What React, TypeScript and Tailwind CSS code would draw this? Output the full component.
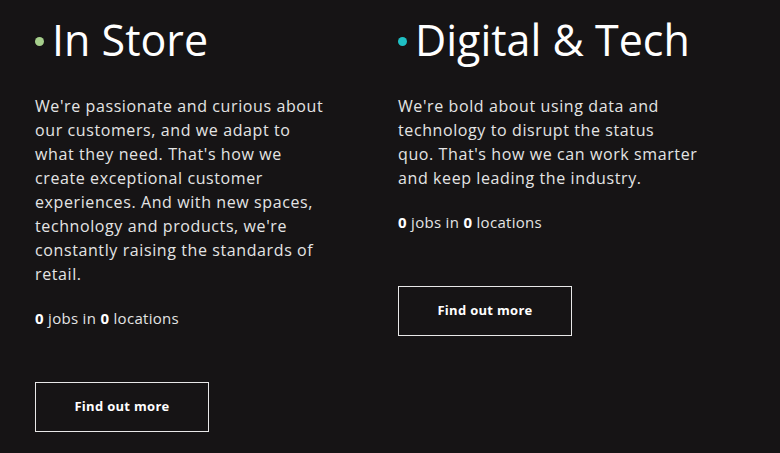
import React from 'react';

interface PillarProps {
  title: string;
  dotColor: string;
  body: React.ReactNode;
  widthClass: string;
}

const Pillar: React.FC<PillarProps> = ({ title, dotColor, body, widthClass }) => {
  return (
    <div className="flex flex-col items-start">
      {/* Heading */}
      <div className="flex items-center h-[58px]">
        <span className={`w-[9px] h-[9px] rounded-full mr-[8px] mt-[4px] ${dotColor}`} />
        <h2 className="text-[43px] leading-none text-white">{title}</h2>
      </div>

      {/* Description */}
      <p className={`mt-[26px] text-[16px] leading-[24px] tracking-[0.6px] text-[#e4e4e4] ${widthClass}`}>
        {body}
      </p>

      {/* Job count */}
      <p className="mt-[20px] text-[15px] leading-[24px] tracking-[0.3px] text-[#e4e4e4]">
        <span className="font-bold text-white">0</span> jobs in{' '}
        <span className="font-bold text-white">0</span> locations
      </p>

      {/* CTA */}
      <button className="mt-[52px] w-[174px] h-[50px] border border-[#e8e8e8] text-[13px] font-bold text-white tracking-[0.3px]">
        Find out more
      </button>
    </div>
  );
};

export default function App() {
  return (
    <div
      className="min-h-screen w-full bg-[#161415] overflow-hidden"
      style={{ fontFamily: '"Open Sans", "Liberation Sans", sans-serif' }}
    >
      <div className="flex pl-[35px] pt-[10px] gap-[64px]">
        <div className="w-[299px]">
          <Pillar
            title="In Store"
            dotColor="bg-[#a6cf8c]"
            widthClass="w-[299px]"
            body="We're passionate and curious about our customers, and we adapt to what they need. That's how we create exceptional customer experiences. And with new spaces, technology and products, we're constantly raising the standards of retail."
          />
        </div>
        <div className="w-[330px]">
          <Pillar
            title="Digital & Tech"
            dotColor="bg-[#1fc0c4]"
            widthClass="w-[330px]"
            body={
              <>
                We're bold about using data and technology to disrupt the status
                <br />
                quo. That's how we can work smarter and keep leading the industry.
              </>
            }
          />
        </div>
      </div>
    </div>
  );
}
